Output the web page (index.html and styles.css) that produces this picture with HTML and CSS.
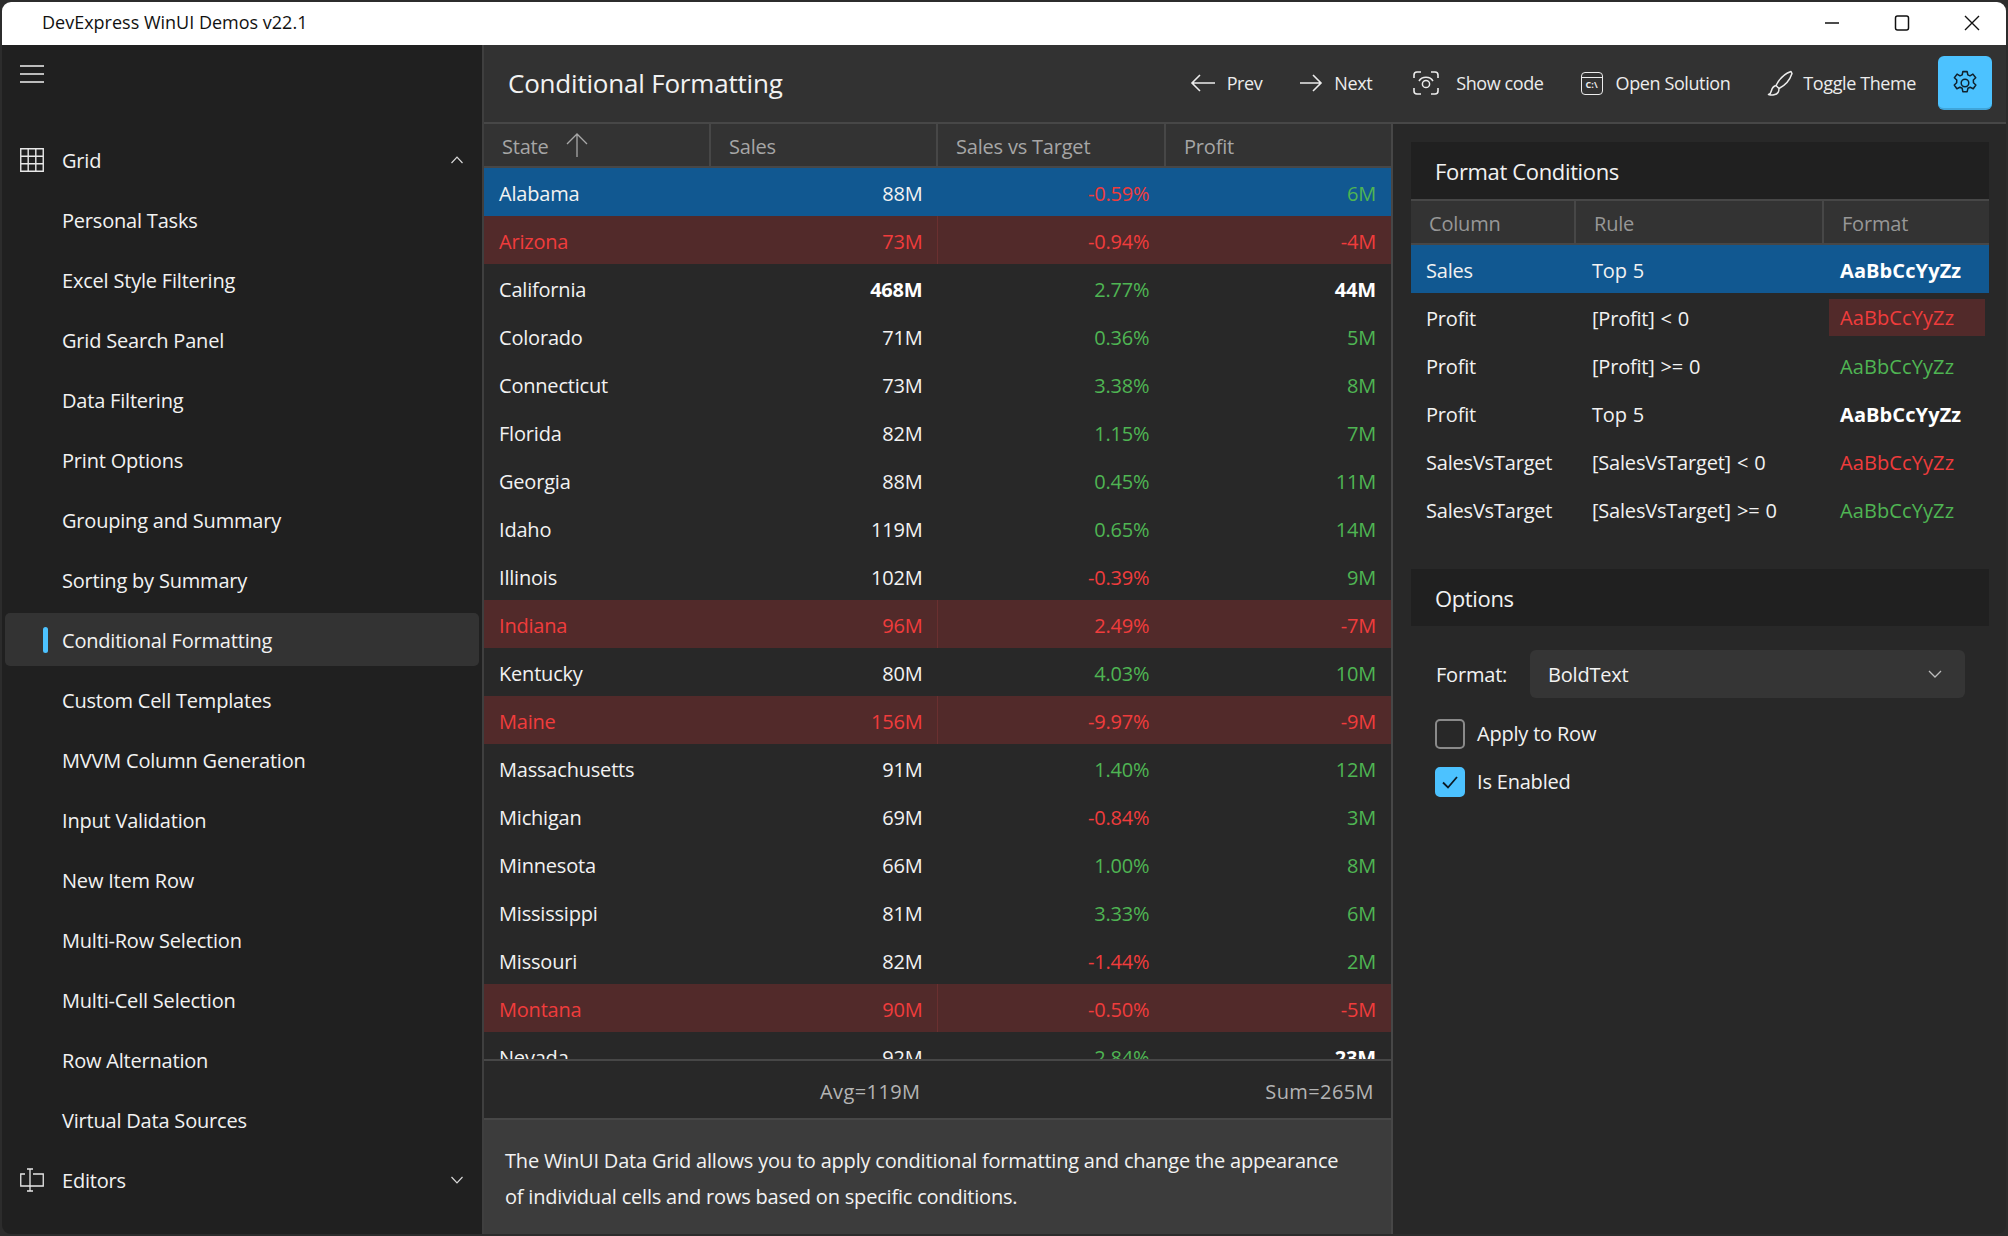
FILE: index.html
```html
<!DOCTYPE html>
<html lang="en">
<head>
<meta charset="utf-8">
<title>DevExpress WinUI Demos v22.1</title>
<link rel="stylesheet" href="styles.css">
</head>
<body>
<div class="window">
  <header class="titlebar">
    <span class="apptitle">DevExpress WinUI Demos v22.1</span>
    <div class="winbtns">
      <svg width="16" height="16" viewBox="0 0 16 16"><path d="M1 8h14" stroke="#111" stroke-width="1.5" fill="none"/></svg>
      <svg width="16" height="16" viewBox="0 0 16 16"><rect x="1.5" y="1" width="13" height="14" rx="2" stroke="#111" stroke-width="1.5" fill="none"/></svg>
      <svg width="16" height="16" viewBox="0 0 16 16"><path d="M1 1l14 14M15 1L1 15" stroke="#111" stroke-width="1.4" fill="none"/></svg>
    </div>
  </header>
  <div class="body">
    <nav class="sidebar">
      <div class="burger"><svg class="blk" width="24" height="18" viewBox="0 0 24 18"><path d="M0 1h24M0 9h24M0 17h24" stroke="#f0f0f0" stroke-width="1.6" fill="none"/></svg></div>
      <div class="group">
        <svg class="gicon" width="24" height="24" viewBox="0 0 24 24"><path d="M.75.75h22.5v22.5H.75zM8.2.75v22.5M15.8.75v22.5M.75 8.2h22.5M.75 15.8h22.5" stroke="#e8e8e8" stroke-width="1.4" fill="none"/></svg>
        <span>Grid</span>
        <svg class="chev" width="12" height="8" viewBox="0 0 12 8"><path d="M.5 7L6 1.2 11.500 7" stroke="#d8d8d8" stroke-width="1.2" fill="none"/></svg>
      </div>
      <div class="item">Personal Tasks</div>
      <div class="item">Excel Style Filtering</div>
      <div class="item">Grid Search Panel</div>
      <div class="item">Data Filtering</div>
      <div class="item">Print Options</div>
      <div class="item">Grouping and Summary</div>
      <div class="item">Sorting by Summary</div>
      <div class="item active"><i class="marker"></i>Conditional Formatting</div>
      <div class="item">Custom Cell Templates</div>
      <div class="item">MVVM Column Generation</div>
      <div class="item">Input Validation</div>
      <div class="item">New Item Row</div>
      <div class="item">Multi-Row Selection</div>
      <div class="item">Multi-Cell Selection</div>
      <div class="item">Row Alternation</div>
      <div class="item">Virtual Data Sources</div>
      <div class="group">
        <svg class="gicon" width="24" height="24" viewBox="0 0 24 24"><path d="M5 6H.75v12H23.250V6H13M7 1h6M10 1v22M7 23h6" stroke="#e8e8e8" stroke-width="1.3" fill="none"/></svg>
        <span>Editors</span>
        <svg class="chev" width="12" height="8" viewBox="0 0 12 8"><path d="M.5 1L6 6.800 11.500 1" stroke="#d8d8d8" stroke-width="1.2" fill="none"/></svg>
      </div>
    </nav>
    <main class="main">
      <div class="topbar">
        <h1 class="pagetitle">Conditional Formatting</h1>
        <div class="tools">
          <div class="tool t-prev"><svg width="26" height="20" viewBox="0 0 26 20"><path d="M25 10H2M10 2l-8 8 8 8" stroke="#ececec" stroke-width="1.600" fill="none"/></svg><span>Prev</span></div>
          <div class="tool t-next"><svg width="24" height="20" viewBox="0 0 24 20"><path d="M1 10h21M14 2l8 8-8 8" stroke="#ececec" stroke-width="1.600" fill="none"/></svg><span>Next</span></div>
          <div class="tool t-code"><svg width="26" height="26" viewBox="0 0 26 26"><path d="M8 2H4a3 3 0 0 0-3 3v3M18 2h4a3 3 0 0 1 3 3v3M8 24H4a3 3 0 0 1-3-3v-3M18 24h4a3 3 0 0 0 3-3v-3" stroke="#ececec" stroke-width="1.600" fill="none"/><circle cx="13" cy="14" r="3.600" stroke="#ececec" stroke-width="1.500" fill="none"/><path d="M6 11c3-5 11-5 14 0" stroke="#ececec" stroke-width="1.500" fill="none"/></svg><span>Show code</span></div>
          <div class="tool t-sol"><span class="console"><b class="consolebar"></b><b class="consoletext">C:\</b></span><span>Open Solution</span></div>
          <div class="tool t-theme"><svg width="26" height="26" viewBox="0 0 26 26"><path d="M24 1.500c-6 2-12 8-15 14l3 3c6-3 11-9 13-15zM9 15.500c-3 1-4 2.500-4.500 5S3 24 1.500 24.500c3.500 1 8 .5 9.500-2 1-1.500 1-3 1-4z" stroke="#ececec" stroke-width="1.500" fill="none" stroke-linejoin="round"/></svg><span>Toggle Theme</span></div>
          <div class="gear"><svg width="26" height="26" viewBox="0 0 24 24"><path d="M10 1.500h4l.6 3 2 .9 2.700-1.600 2.600 3.400-2.200 2 .1 2.600 2.200 2-2.400 3.500-2.800-1.400-2.100 1-.7 3.100h-4l-.6-3.100-2.100-1-2.800 1.400-2.400-3.500 2.200-2 .1-2.600-2.200-2L4.700 3.800l2.700 1.600 2-.9z" stroke="#10222e" stroke-width="1.400" fill="none" stroke-linejoin="round"/><circle cx="12" cy="12" r="3.500" stroke="#10222e" stroke-width="1.400" fill="none"/></svg></div>
        </div>
      </div>
      <div class="content">
        <section class="center">
          <div class="ghead">
            <div class="hcell"><span>State</span><svg class="sort" width="22" height="24" viewBox="0 0 22 24"><path d="M11 24V1M1 11L11 1l10 10" stroke="#a8a8a8" stroke-width="1.300" fill="none"/></svg></div>
            <div class="hcell">Sales</div>
            <div class="hcell">Sales vs Target</div>
            <div class="hcell last">Profit</div>
          </div>
          <div class="rows">
            <div class="row sel"><span>Alabama</span><span class="n">88M</span><span class="n red">-0.59%</span><span class="n green">6M</span></div>
            <div class="row neg"><span>Arizona</span><span class="n">73M</span><span class="n">-0.94%</span><span class="n">-4M</span></div>
            <div class="row"><span>California</span><span class="n bold">468M</span><span class="n green">2.77%</span><span class="n bold">44M</span></div>
            <div class="row"><span>Colorado</span><span class="n">71M</span><span class="n green">0.36%</span><span class="n green">5M</span></div>
            <div class="row"><span>Connecticut</span><span class="n">73M</span><span class="n green">3.38%</span><span class="n green">8M</span></div>
            <div class="row"><span>Florida</span><span class="n">82M</span><span class="n green">1.15%</span><span class="n green">7M</span></div>
            <div class="row"><span>Georgia</span><span class="n">88M</span><span class="n green">0.45%</span><span class="n green">11M</span></div>
            <div class="row"><span>Idaho</span><span class="n">119M</span><span class="n green">0.65%</span><span class="n green">14M</span></div>
            <div class="row"><span>Illinois</span><span class="n">102M</span><span class="n red">-0.39%</span><span class="n green">9M</span></div>
            <div class="row neg"><span>Indiana</span><span class="n">96M</span><span class="n">2.49%</span><span class="n">-7M</span></div>
            <div class="row"><span>Kentucky</span><span class="n">80M</span><span class="n green">4.03%</span><span class="n green">10M</span></div>
            <div class="row neg"><span>Maine</span><span class="n">156M</span><span class="n">-9.97%</span><span class="n">-9M</span></div>
            <div class="row"><span>Massachusetts</span><span class="n">91M</span><span class="n green">1.40%</span><span class="n green">12M</span></div>
            <div class="row"><span>Michigan</span><span class="n">69M</span><span class="n red">-0.84%</span><span class="n green">3M</span></div>
            <div class="row"><span>Minnesota</span><span class="n">66M</span><span class="n green">1.00%</span><span class="n green">8M</span></div>
            <div class="row"><span>Mississippi</span><span class="n">81M</span><span class="n green">3.33%</span><span class="n green">6M</span></div>
            <div class="row"><span>Missouri</span><span class="n">82M</span><span class="n red">-1.44%</span><span class="n green">2M</span></div>
            <div class="row neg"><span>Montana</span><span class="n">90M</span><span class="n">-0.50%</span><span class="n">-5M</span></div>
            <div class="row"><span>Nevada</span><span class="n">92M</span><span class="n green">2.84%</span><span class="n bold">23M</span></div>
          </div>
          <div class="summary">
            <span class="sum s-a">Avg=119M</span>
            <span class="sum s-b">Sum=265M</span>
          </div>
          <div class="desc">The WinUI Data Grid allows you to apply conditional formatting and change the appearance of individual cells and rows based on specific conditions.</div>
        </section>
        <aside class="side">
          <div class="ptitle">Format Conditions</div>
          <div class="chead">
            <div class="chcell">Column</div>
            <div class="chcell">Rule</div>
            <div class="chcell last">Format</div>
          </div>
          <div class="crow sel"><span>Sales</span><span>Top 5</span><span class="fmt bold">AaBbCcYyZz</span></div>
          <div class="crow"><span>Profit</span><span>[Profit] &lt; 0</span><span class="fmt fneg">AaBbCcYyZz</span></div>
          <div class="crow"><span>Profit</span><span>[Profit] &gt;= 0</span><span class="fmt green">AaBbCcYyZz</span></div>
          <div class="crow"><span>Profit</span><span>Top 5</span><span class="fmt bold">AaBbCcYyZz</span></div>
          <div class="crow"><span>SalesVsTarget</span><span>[SalesVsTarget] &lt; 0</span><span class="fmt red">AaBbCcYyZz</span></div>
          <div class="crow"><span>SalesVsTarget</span><span>[SalesVsTarget] &gt;= 0</span><span class="fmt green">AaBbCcYyZz</span></div>
          <div class="ptitle opts">Options</div>
          <div class="formrow">
            <label class="flabel">Format:</label>
            <div class="combo"><span>BoldText</span><svg width="14" height="8" viewBox="0 0 14 8"><path d="M1 1l6 6 6-6" stroke="#bdbdbd" stroke-width="1.300" fill="none"/></svg></div>
          </div>
          <div class="check first"><i class="box"></i><span class="clabel">Apply to Row</span></div>
          <div class="check"><i class="box on"><svg width="18" height="14" viewBox="0 0 18 14"><path d="M2 7.500l5 5L16 2" stroke="#0b1a24" stroke-width="1.800" fill="none"/></svg></i><span class="clabel">Is Enabled</span></div>
        </aside>
      </div>
    </main>
  </div>
</div>
</body>
</html>
```
FILE: styles.css
```css
* { box-sizing: border-box; }
html, body { margin: 0; height: 100%; }
body {
  background: #2c2c2c;
  font-family: "Open Sans", "Noto Sans", "Liberation Sans", sans-serif;
  font-size: 20px;
  letter-spacing: -0.2px;
  color: #f2f2f2;
  padding: 2px;
  overflow: hidden;
}
.blk { display: block; }
.window {
  width: 2004px;
  height: 1232px;
  border-radius: 9px;
  overflow: hidden;
  display: flex;
  flex-direction: column;
  background: #282828;
}
.titlebar {
  flex: 0 0 43px;
  background: #fff;
  color: #111;
  display: flex;
  align-items: center;
  padding: 0 0 4px 40px;
  font-size: 18px;
  letter-spacing: 0;
}
.winbtns { margin-left: auto; display: flex; gap: 54px; padding: 2px 26px 0 0; }
.body { flex: 1; display: flex; min-height: 0; }
.sidebar {
  flex: 0 0 482px;
  background: #202020;
  border-right: 2px solid #3f3f3f;
}
.burger { height: 85px; padding: 20px 0 0 18px; }
.group, .item { height: 60px; display: flex; align-items: center; }
.group { padding: 0 18px; }
.group span { margin-left: 18px; }
.chev { margin-left: auto; margin-right: 1px; }
.item { padding-left: 60px; position: relative; }
.item.active::before {
  content: "";
  position: absolute;
  left: 3px; right: 3px; top: 3px; bottom: 4px;
  background: #333;
  border-radius: 5px;
}
.item.active { z-index: 0; }
.item.active::before { z-index: -1; }
.marker {
  position: absolute;
  left: 41px; top: 17px;
  width: 5px; height: 26px;
  border-radius: 3px;
  background: #4cc2ff;
}
.main { flex: 1; display: flex; flex-direction: column; min-width: 0; }
.topbar {
  flex: 0 0 79px;
  background: #323232;
  border-bottom: 2px solid #474747;
  display: flex;
  align-items: center;
  padding: 0 0 1px 24px;
}
.pagetitle { margin: 0; font-size: 26px; font-weight: 400; letter-spacing: -0.2px; }
.tools { margin-left: auto; display: flex; align-items: center; padding-right: 14px; }
.tool { display: flex; align-items: center; font-size: 18px; letter-spacing: -0.4px; color: #ececec; }
.t-prev { gap: 11px; margin-right: 37px; }
.t-next { gap: 11px; margin-right: 41px; }
.t-code { gap: 17px; margin-right: 37px; }
.t-sol { gap: 13px; margin-right: 37px; }
.t-theme { gap: 10px; margin-right: 22px; }
.console {
  width: 22px; height: 23px;
  border: 1.500px solid #ececec;
  border-radius: 4px;
  display: block;
  position: relative;
}
.consolebar { display: block; height: 5px; border-bottom: 1.500px solid #ececec; }
.consoletext { display: block; font-size: 9px; font-weight: 700; line-height: 13px; text-align: center; letter-spacing: 0; }
.gear {
  width: 54px; height: 54px;
  background: #4cc2ff;
  border-radius: 6px;
  display: flex; align-items: center; justify-content: center;
  border-bottom: 2px solid #3fa5da;
  padding-top: 2px;
}
.content { flex: 1; display: flex; min-height: 0; }
.center {
  flex: 0 0 909px;
  border-right: 2px solid #474747;
  display: flex;
  flex-direction: column;
}
.ghead {
  flex: 0 0 44px;
  display: grid;
  grid-template-columns: 227px 227px 228px 1fr;
  background: #333;
  border-bottom: 2px solid #474747;
}
.hcell {
  display: flex;
  align-items: center;
  padding: 2px 0 0 18px;
  color: #a6a6a6;
  border-right: 2px solid #474747;
}
.hcell.last { border-right: 0; }
.sort { margin: -2px 0 0 17px; }
.rows { flex: 0 0 891px; overflow: hidden; }
.row {
  height: 48px;
  display: grid;
  grid-template-columns: repeat(4, 1fr);
  align-items: center;
  padding-top: 2px;
}
.row span { padding: 0 15px; }
.row .n { text-align: right; }
.row.sel { background: #115891; }
.row.neg {
  background: #522a2a;
  color: #f03c3c;
  position: relative;
}
.row.neg::after {
  content: "";
  position: absolute;
  left: 453px; top: 0; bottom: 0;
  width: 1px;
  background: #6a3030;
}
.red { color: #f03c3c; }
.green { color: #4fb553; }
.bold { font-weight: 700; color: #fff; }
.summary {
  flex: 0 0 61px;
  border-top: 2px solid #474747;
  border-bottom: 2px solid #474747;
  display: grid;
  grid-template-columns: repeat(4, 1fr);
  align-items: center;
  padding-top: 3px;
  color: #b4b4b4;
  letter-spacing: 0.4px;
}
.sum { text-align: right; padding-right: 17px; }
.s-a { grid-column: 2; }
.s-b { grid-column: 4; }
.desc {
  flex: 1;
  background: #3c3c3c;
  padding: 23px 32px 0 21px;
  line-height: 36px;
}
.side { flex: 1; padding: 18px 17px 0 18px; min-width: 0; }
.ptitle {
  height: 57px;
  background: #202020;
  display: flex;
  align-items: center;
  padding-left: 24px;
  font-size: 22px;
  letter-spacing: -0.35px;
}
.chead {
  height: 46px;
  display: grid;
  grid-template-columns: 165px 248px 1fr;
  background: #333;
  border-top: 2px solid #474747;
  border-bottom: 2px solid #474747;
}
.chcell {
  display: flex;
  align-items: center;
  padding: 2px 0 0 18px;
  color: #979797;
  border-right: 2px solid #474747;
}
.chcell.last { border-right: 0; }
.crow {
  height: 48px;
  display: grid;
  grid-template-columns: 166px 248px 1fr;
  align-items: center;
  padding: 2px 0 0 15px;
  word-spacing: 1px;
}
.crow.sel { background: #115891; }
.fmt { display: block; letter-spacing: 0.1px; }
.fneg {
  background: #522a2a;
  color: #f03c3c;
  margin: -2px 4px 0 -11px;
  padding: 4px 0 4px 11px;
  line-height: 29px;
}
.opts { margin-top: 36px; }
.formrow { display: flex; align-items: center; margin-top: 24px; padding-left: 25px; }
.flabel { width: 94px; }
.combo {
  width: 435px; height: 48px;
  background: #353535;
  border-radius: 6px;
  display: flex; align-items: center; justify-content: space-between;
  padding: 0 23px 0 18px;
}
.check { display: flex; align-items: center; gap: 12px; padding-left: 24px; margin-top: 18px; height: 30px; }
.check.first { margin-top: 21px; }
.clabel { padding-bottom: 2px; }
.box {
  width: 30px; height: 30px;
  border-radius: 5px;
  border: 2px solid #8a8a8a;
  display: flex; align-items: center; justify-content: center;
}
.box.on { background: #4cc2ff; border-color: #4cc2ff; }
```
